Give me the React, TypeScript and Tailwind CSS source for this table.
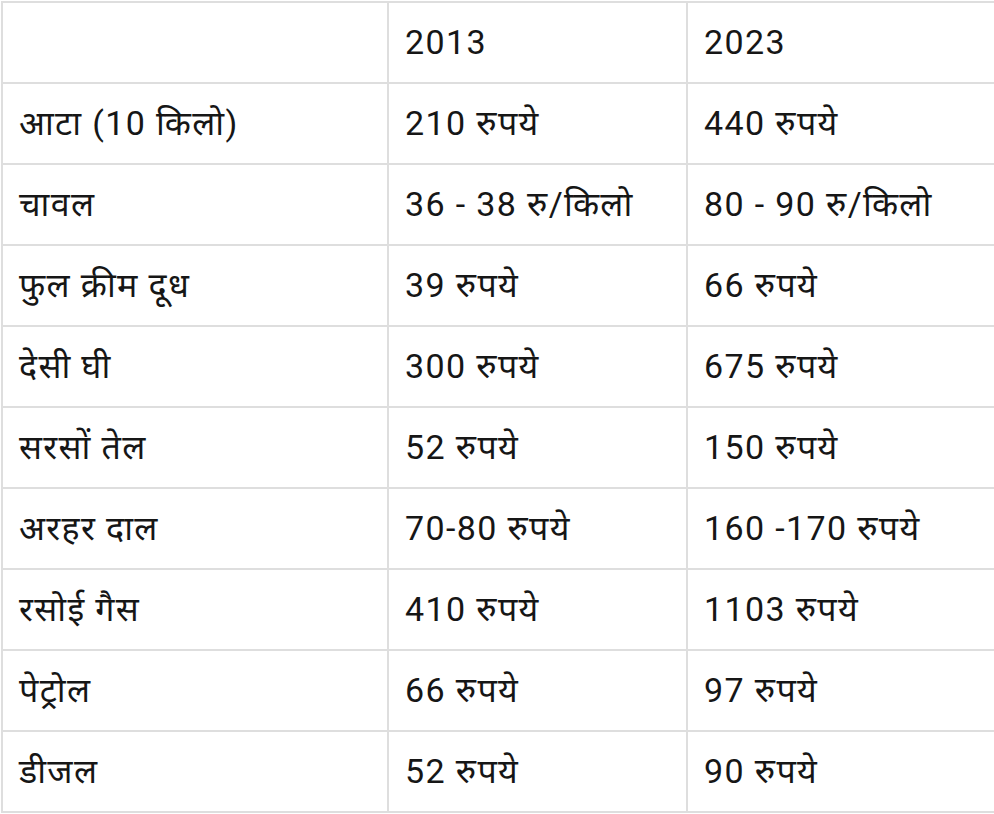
import * as React from "react";

type Row = readonly [string, string, string];

const rows: readonly Row[] = [
  ["", "2013", "2023"],
  ["आटा (10 किलो)", "210 रुपये", "440 रुपये"],
  ["चावल", "36 - 38 रु/किलो", "80 - 90 रु/किलो"],
  ["फुल क्रीम दूध", "39 रुपये", "66 रुपये"],
  ["देसी घी", "300 रुपये", "675 रुपये"],
  ["सरसों तेल", "52 रुपये", "150 रुपये"],
  ["अरहर दाल", "70-80 रुपये", "160 -170 रुपये"],
  ["रसोई गैस", "410 रुपये", "1103 रुपये"],
  ["पेट्रोल", "66 रुपये", "97 रुपये"],
  ["डीजल", "52 रुपये", "90 रुपये"]
];

export default function App() {
  return (
    <div className="h-[814px] w-[994px] overflow-hidden bg-white pt-px pl-px font-['Roboto','Noto_Sans',sans-serif] text-[34px] tracking-[0.04em] text-[#161616]">
      <div className="grid w-[1100px] grid-cols-[386px_299px_1fr] border-t-2 border-l-2 border-[#dedede]">
        {rows.map((row, i) =>
          row.map((cell, j) => (
            <div
              key={`${i}-${j}`}
              className="flex h-[81px] items-center border-r-2 border-b-2 border-[#dedede] pl-4 whitespace-nowrap"
            >
              {cell}
            </div>
          ))
        )}
      </div>
    </div>
  );
}
